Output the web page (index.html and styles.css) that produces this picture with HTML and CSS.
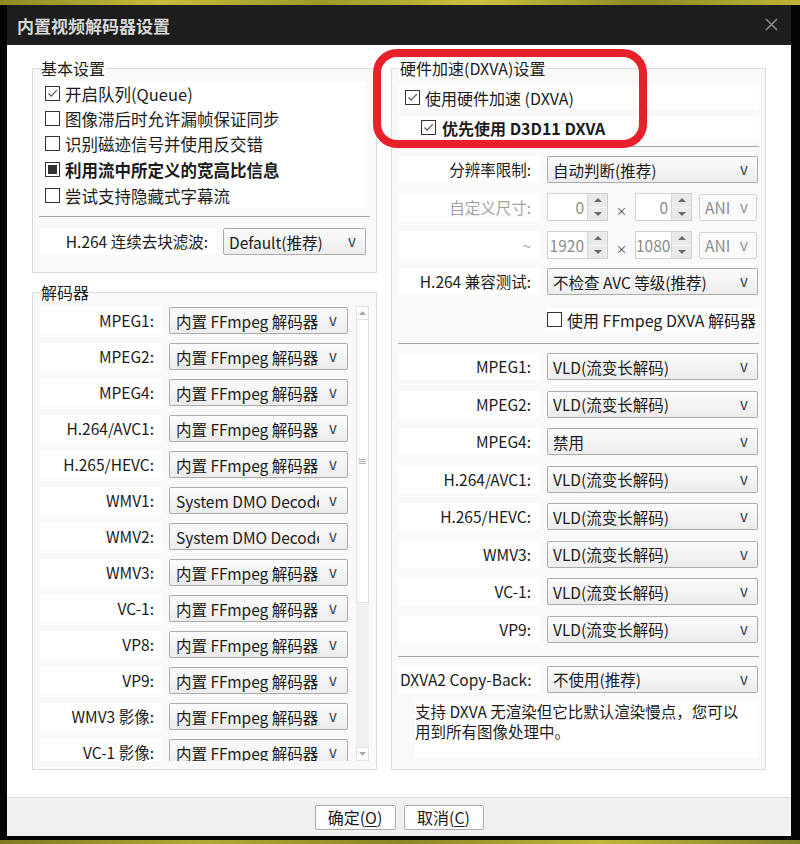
FILE: index.html
```html
<!DOCTYPE html>
<html lang="zh-CN">
<head>
<meta charset="utf-8">
<title>内置视频解码器设置</title>
<link rel="stylesheet" href="styles.css">
</head>
<body>
<div class="screen">
  <div class="wall-top"></div>
  <div class="window">
    <div class="titlebar">
      <span class="title">内置视频解码器设置</span>
      <svg class="close" width="13" height="13" viewBox="0 0 13 13"><path d="M1 1L12 12M12 1L1 12" stroke="#8c8c8c" stroke-width="1.6" fill="none"/></svg>
    </div>
    <div class="client">
      <div class="col-left">
        <fieldset class="group g-basic">
          <legend>基本设置</legend>
          <div class="checklist">
            <div class="chk"><span class="box on"><svg width="13" height="13" viewBox="0 0 13 13"><path d="M2.5 6.5L5.2 9.2L10.8 3.2" stroke="#555" stroke-width="1.2" fill="none"/></svg></span><span>开启队列(Queue)</span></div>
            <div class="chk"><span class="box"></span><span>图像滞后时允许漏帧保证同步</span></div>
            <div class="chk"><span class="box"></span><span>识别磁迹信号并使用反交错</span></div>
            <div class="chk bold tall"><span class="box mixed"><i></i></span><span>利用流中所定义的宽高比信息</span></div>
            <div class="chk"><span class="box"></span><span>尝试支持隐藏式字幕流</span></div>
          </div>
          <div class="sep sep-left"></div>
          <div class="frow deblock">
            <span class="lbl">H.264 连续去块滤波:</span>
            <div class="sel w143"><span class="val">Default(推荐)</span><span class="arr">v</span></div>
          </div>
        </fieldset>
        <fieldset class="group g-dec">
          <legend>解码器</legend>
          <div class="scrollwrap">
            <div class="scrolllist">
              <div class="drow"><span class="lbl">MPEG1:</span><div class="sel"><span class="val">内置 FFmpeg 解码器(推荐)</span><span class="arr">v</span></div></div>
              <div class="drow"><span class="lbl">MPEG2:</span><div class="sel"><span class="val">内置 FFmpeg 解码器(推荐)</span><span class="arr">v</span></div></div>
              <div class="drow"><span class="lbl">MPEG4:</span><div class="sel"><span class="val">内置 FFmpeg 解码器(推荐)</span><span class="arr">v</span></div></div>
              <div class="drow"><span class="lbl">H.264/AVC1:</span><div class="sel"><span class="val">内置 FFmpeg 解码器(推荐)</span><span class="arr">v</span></div></div>
              <div class="drow"><span class="lbl">H.265/HEVC:</span><div class="sel"><span class="val">内置 FFmpeg 解码器(推荐)</span><span class="arr">v</span></div></div>
              <div class="drow"><span class="lbl">WMV1:</span><div class="sel"><span class="val">System DMO Decoder</span><span class="arr">v</span></div></div>
              <div class="drow"><span class="lbl">WMV2:</span><div class="sel"><span class="val">System DMO Decoder</span><span class="arr">v</span></div></div>
              <div class="drow"><span class="lbl">WMV3:</span><div class="sel"><span class="val">内置 FFmpeg 解码器(推荐)</span><span class="arr">v</span></div></div>
              <div class="drow"><span class="lbl">VC-1:</span><div class="sel"><span class="val">内置 FFmpeg 解码器(推荐)</span><span class="arr">v</span></div></div>
              <div class="drow"><span class="lbl">VP8:</span><div class="sel"><span class="val">内置 FFmpeg 解码器(推荐)</span><span class="arr">v</span></div></div>
              <div class="drow"><span class="lbl">VP9:</span><div class="sel"><span class="val">内置 FFmpeg 解码器(推荐)</span><span class="arr">v</span></div></div>
              <div class="drow"><span class="lbl">WMV3 影像:</span><div class="sel"><span class="val">内置 FFmpeg 解码器(推荐)</span><span class="arr">v</span></div></div>
              <div class="drow"><span class="lbl">VC-1 影像:</span><div class="sel"><span class="val">内置 FFmpeg 解码器(推荐)</span><span class="arr">v</span></div></div>
            </div>
            <div class="vscroll">
              <div class="sbtn"><svg width="7" height="4" viewBox="0 0 7 4"><path d="M0 4L3.5 0L7 4Z" fill="#a8a8a8"/></svg></div>
              <div class="thumb"><svg width="7" height="5" viewBox="0 0 7 5"><path d="M0 .5H7M0 2.5H7M0 4.5H7" stroke="#b0b0b0" stroke-width="1"/></svg></div>
              <div class="strack"></div>
              <div class="sbtn"><svg width="7" height="4" viewBox="0 0 7 4"><path d="M0 0L3.5 4L7 0Z" fill="#a8a8a8"/></svg></div>
            </div>
          </div>
        </fieldset>
      </div>
      <fieldset class="group g-hw">
        <legend>硬件加速(DXVA)设置</legend>
        <div class="hwchecks">
          <div class="chk hw1"><span class="box on"><svg width="13" height="13" viewBox="0 0 13 13"><path d="M2.5 6.5L5.2 9.2L10.8 3.2" stroke="#555" stroke-width="1.2" fill="none"/></svg></span><span>使用硬件加速 (DXVA)</span></div>
          <div class="chk hw2 bold"><span class="box on"><svg width="13" height="13" viewBox="0 0 13 13"><path d="M2.5 6.5L5.2 9.2L10.8 3.2" stroke="#555" stroke-width="1.2" fill="none"/></svg></span><span>优先使用 D3D11 DXVA</span></div>
        </div>
        <div class="sep sep-right"></div>
        <div class="hrow r-res"><span class="lbl">分辨率限制:</span><div class="sel w211"><span class="val">自动判断(推荐)</span><span class="arr">v</span></div></div>
        <div class="hrow r-size1">
          <span class="lbl dis">自定义尺寸:</span>
          <div class="spin s1"><span class="num">0</span><span class="spn"><i class="up"></i><i class="dn"></i></span></div>
          <span class="times">×</span>
          <div class="spin s2"><span class="num">0</span><span class="spn"><i class="up"></i><i class="dn"></i></span></div>
          <div class="sel ani"><span class="val">ANI</span><span class="arr">v</span></div>
        </div>
        <div class="hrow r-size2">
          <span class="lbl dis">~</span>
          <div class="spin s1"><span class="num">1920</span><span class="spn"><i class="up"></i><i class="dn"></i></span></div>
          <span class="times">×</span>
          <div class="spin s2"><span class="num">1080</span><span class="spn"><i class="up"></i><i class="dn"></i></span></div>
          <div class="sel ani"><span class="val">ANI</span><span class="arr">v</span></div>
        </div>
        <div class="hrow r-avc"><span class="lbl">H.264 兼容测试:</span><div class="sel w211"><span class="val">不检查 AVC 等级(推荐)</span><span class="arr">v</span></div></div>
        <div class="chk ffchk"><span class="box"></span><span>使用 FFmpeg DXVA 解码器</span></div>
        <div class="sep sep-right s2"></div>
        <div class="modes">
          <div class="hrow"><span class="lbl">MPEG1:</span><div class="sel w211"><span class="val">VLD(流变长解码)</span><span class="arr">v</span></div></div>
          <div class="hrow"><span class="lbl">MPEG2:</span><div class="sel w211"><span class="val">VLD(流变长解码)</span><span class="arr">v</span></div></div>
          <div class="hrow"><span class="lbl">MPEG4:</span><div class="sel w211"><span class="val">禁用</span><span class="arr">v</span></div></div>
          <div class="hrow"><span class="lbl">H.264/AVC1:</span><div class="sel w211"><span class="val">VLD(流变长解码)</span><span class="arr">v</span></div></div>
          <div class="hrow"><span class="lbl">H.265/HEVC:</span><div class="sel w211"><span class="val">VLD(流变长解码)</span><span class="arr">v</span></div></div>
          <div class="hrow"><span class="lbl">WMV3:</span><div class="sel w211"><span class="val">VLD(流变长解码)</span><span class="arr">v</span></div></div>
          <div class="hrow"><span class="lbl">VC-1:</span><div class="sel w211"><span class="val">VLD(流变长解码)</span><span class="arr">v</span></div></div>
          <div class="hrow"><span class="lbl">VP9:</span><div class="sel w211"><span class="val">VLD(流变长解码)</span><span class="arr">v</span></div></div>
        </div>
        <div class="sep sep-right s3"></div>
        <div class="hrow r-copy"><span class="lbl">DXVA2 Copy-Back:</span><div class="sel w211"><span class="val">不使用(推荐)</span><span class="arr">v</span></div></div>
        <p class="note">支持 DXVA 无渲染但它比默认渲染慢点，您可以用到所有图像处理中。</p>
      </fieldset>
      <div class="highlight"></div>
    </div>
    <div class="footer">
      <button class="btn b-ok">确定(<u>O</u>)</button>
      <button class="btn b-cancel">取消(<u>C</u>)</button>
    </div>
  </div>
  <div class="wall-bottom"></div>
</div>
</body>
</html>
```
FILE: styles.css
```css
* { box-sizing: border-box; }
html, body { margin: 0; padding: 0; }
body {
  width: 800px;
  height: 844px;
  overflow: hidden;
  background: #050505;
  font-family: "Noto Sans CJK SC", "Noto Sans", sans-serif;
  color: #1b1b1b;
  font-size: 15.5px;
}
.screen { display: flex; flex-direction: column; height: 844px; }
.wall-top {
  height: 5px;
  background: linear-gradient(90deg, #8f8a25 0%, #c4bd3a 20%, #9d9829 40%, #c9c23f 60%, #8e8a26 80%, #bdb536 100%);
}
.wall-bottom {
  margin-top: 4px;
  height: 4px;
  background: linear-gradient(90deg, #7d7a22 0%, #b1aa33 25%, #8a8626 50%, #beb73a 75%, #80802a 100%);
}
.window { margin-left: 7px; width: 784px; display: flex; flex-direction: column; }
.titlebar {
  height: 40px;
  background: #1e1e1e;
  display: flex;
  align-items: center;
  justify-content: space-between;
  padding: 0 13px 0 10px;
}
.title { color: #d6d6d6; font-size: 17px; font-weight: bold; letter-spacing: 0; }
.close { display: block; margin-top: -2px; }

.client {
  position: relative;
  background: #fff;
  height: 752px;
  display: grid;
  grid-template-columns: 345px 375px;
  column-gap: 14px;
  padding: 13px 25px 0 25px;
  align-items: start;
}
.col-left { display: flex; flex-direction: column; gap: 9px; }

.group {
  margin: 0;
  padding: 0;
  min-width: 0;
  border: 1px solid #dcdcdc;
  background: #f9f9f9;
}
.group legend {
  margin-left: 7px;
  padding: 0 1px;
  line-height: 20px;
  font-size: 16px;
  background: #fff;
  color: #1b1b1b;
}
.g-basic { height: 215px; }
.g-dec { height: 488px; }
.g-hw { height: 712px; }

/* checkboxes */
.chk { display: flex; align-items: center; background: #fff; white-space: nowrap; }
.box {
  width: 15px; height: 15px;
  border: 1px solid #333;
  background: #fff;
  flex: none;
  display: flex; align-items: center; justify-content: center;
}
.box svg { display: block; }
.box.mixed i { display: block; width: 9px; height: 9px; background: #333; }
.bold { font-weight: bold; }

.checklist { margin: 3px 11px 0 7px; background: #fff; }
.checklist .chk { height: 25px; padding-left: 5px; font-size: 16.5px; gap: 5px; }
.checklist .chk.tall { height: 27px; font-size: 16.5px; }

.sep { height: 1px; background: #a5a5a5; }
.sep-left { margin: 8px 6px 0 6px; }
.sep-right { margin: 7px 6px 0 6px; }

.lbl {
  background: #fff;
  text-align: right;
  white-space: nowrap;
  flex: none;
}
.lbl.dis { color: #a3a3a3; }

/* select */
.sel {
  height: 27px;
  border: 1px solid #acacac;
  border-radius: 2px;
  background: linear-gradient(#fbfbfb, #ececec);
  display: flex;
  align-items: center;
  flex: none;
  white-space: nowrap;
}
.sel .val { flex: 1; overflow: hidden; padding-left: 5px; }
.sel .arr { width: 26px; text-align: center; font-size: 15px; color: #2a3b55; flex: none; line-height: 1; padding-bottom: 2px; }

.frow { display: flex; align-items: center; }
.deblock { margin: 11px 0 0 7px; }
.deblock .lbl { width: 176px; padding-right: 8px; line-height: 27px; }
.deblock .sel { width: 143px; margin-left: 7px; }

/* decoder list */
.scrollwrap { display: flex; margin: 4px 0 0 7px; height: 455px; }
.scrolllist { width: 316px; overflow: hidden; padding-top: 1px; }
.drow { display: flex; align-items: center; margin-bottom: 9px; }
.drow .lbl { width: 122px; padding-right: 8px; line-height: 27px; }
.drow .sel { width: 179px; margin-left: 7px; }
.drow .sel .val { padding-left: 6px; }
.drow .sel .arr { width: 28px; }

.vscroll {
  width: 13px;
  background: #f0f0f0;
  display: flex;
  flex-direction: column;
}
.sbtn {
  height: 14px;
  background: #fff;
  border: 1px solid #e2e2e2;
  display: flex; align-items: center; justify-content: center;
}
.sbtn svg { display: block; }
.thumb {
  height: 283px;
  background: #fff;
  border: 1px solid #e2e2e2;
  border-top: none;
  display: flex; align-items: center; justify-content: center;
}
.thumb svg { display: block; }
.strack { flex: 1; }

/* hardware group */
.hwchecks { margin: 8px 6px 0 6px; display: flex; flex-direction: column; gap: 7px; }
.hwchecks .chk { height: 23px; font-size: 16px; gap: 5px; }
.hw1 { padding-left: 7px; }
.hw2 { padding-left: 23px; gap: 6px !important; }

.hrow { display: flex; align-items: center; margin-left: 6px; }
.hrow .lbl { width: 142px; padding-right: 9px; line-height: 27px; }
.hrow .sel.w211 { width: 211px; margin-left: 7px; }
.r-res { margin-top: 9px; }
.r-size1 { margin-top: 10px; }
.r-size2 { margin-top: 10px; }
.r-size1 .lbl, .r-size2 .lbl { line-height: 28px; }
.r-avc { margin-top: 9px; }

.spin {
  height: 28px;
  border: 1px solid #cfcfcf;
  background: #fff;
  display: flex;
  flex: none;
  color: #8c8c8c;
}
.spin.s1 { width: 61px; margin-left: 7px; }
.spin.s2 { width: 57px; }
.spin .num { flex: 1; text-align: right; padding-right: 3px; line-height: 26px; overflow: hidden; white-space: nowrap; }
.spin .spn { width: 20px; display: flex; flex-direction: column; background: #e9e9e9; border-left: 1px solid #d7d7d7; }
.spin .spn i { flex: 1; display: flex; align-items: center; justify-content: center; }
.spin .spn i.up { border-bottom: 1px solid #f5f5f5; }
.spin .spn i::before { content: ""; border-left: 4px solid transparent; border-right: 4px solid transparent; }
.spin .spn i.up::before { border-bottom: 4px solid #6a6a6a; }
.spin .spn i.dn::before { border-top: 4px solid #6a6a6a; }
.times { width: 27px; text-align: center; font-size: 11px; padding-top: 8px; color: #333; }
.sel.ani {
  width: 58px; height: 27px; margin-left: 7px;
  border-color: #d3d3d3;
  background: #fbfbfb;
  color: #8c8c8c;
}
.sel.ani .arr { color: #8c8c8c; width: 24px; }

.ffchk { margin: 13px 0 0 155px; width: 211px; height: 23px; font-size: 16px; gap: 5px; }

.sep-right.s2 { margin-top: 12px; }
.modes { margin-top: 9px; display: flex; flex-direction: column; gap: 10.5px; }
.sep-right.s3 { margin-top: 13px; }
.r-copy { margin-top: 9px; }
.r-copy .lbl { padding-left: 2px; }

.note {
  margin: 8px 0 0 23px;
  width: 342px;
  height: 56px;
  padding-right: 8px;
  background: #fff;
  font-size: 15.5px;
  line-height: 20px;
}

.highlight {
  position: absolute;
  left: 366px;
  top: 4px;
  width: 274px;
  height: 99px;
  border: 8px solid #e8202a;
  border-radius: 24px;
  pointer-events: none;
}

.footer {
  height: 39px;
  border-top: 1px solid #dedede;
  background: #f0f0f0;
  display: flex;
  align-items: center;
  justify-content: center;
  gap: 8px;
}
.btn {
  height: 25px;
  border: 1px solid #adadad;
  border-radius: 2px;
  background: #fdfdfd;
  font-family: inherit;
  font-size: 16px;
  color: #1b1b1b;
  padding: 0;
  line-height: 23px;
}
.b-ok { width: 81px; }
.b-cancel { width: 80px; }
.btn u { text-decoration-thickness: 1px; text-underline-offset: 2px; }
```
